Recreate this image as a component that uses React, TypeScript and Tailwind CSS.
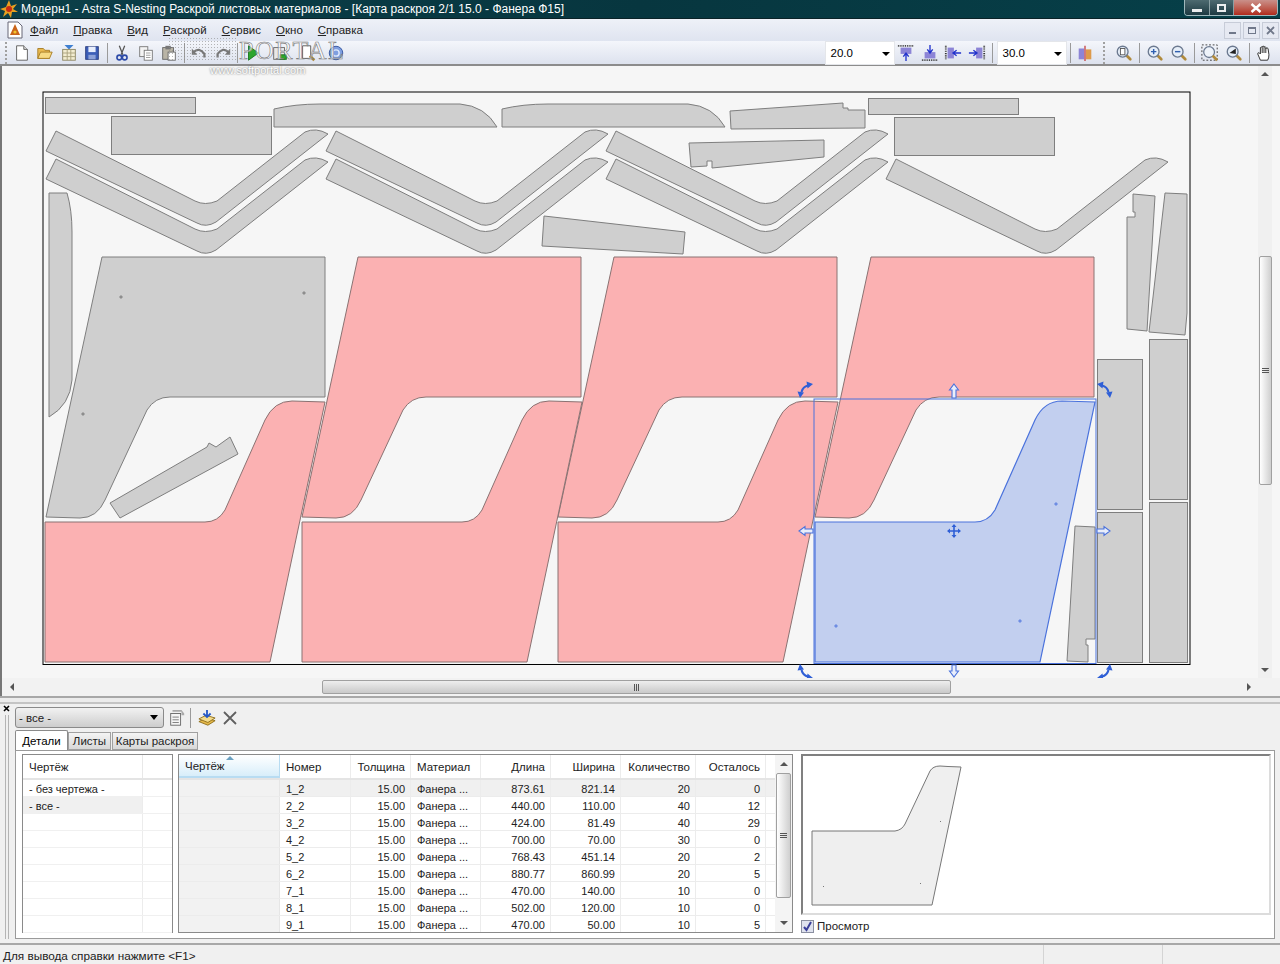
import { ReactNode } from "react";

const uiFont = { fontFamily: '"Liberation Sans", "Noto Sans", sans-serif' };

const Chevron = "M56 131 L46 151 L197 223 Q206 228 216 222 L328 134 Q316 127 305 132 L217 201 Q205 206 195 201 Z";
const Upper = "M102 257 L325 257 L325 397 L170 397 Q155 397 147 410 L105 500 Q97 518 80 518 L46 517 Z";
const Lower = "M45 522 L205 522 Q218 522 225 510 L265 420 Q274 401 292 401 L325 402 L270 662 L45 662 Z";

const rows = [
  ["1_2", "873.61", "821.14", "20", "0"],
  ["2_2", "440.00", "110.00", "40", "12"],
  ["3_2", "424.00", "81.49", "40", "29"],
  ["4_2", "700.00", "70.00", "30", "0"],
  ["5_2", "768.43", "451.14", "20", "2"],
  ["6_2", "880.77", "860.99", "20", "5"],
  ["7_1", "470.00", "140.00", "10", "0"],
  ["8_1", "502.00", "120.00", "10", "0"],
  ["9_1", "470.00", "50.00", "10", "5"],
];

const Ico = ({ children }: { children: ReactNode }) => (
  <svg width="18" height="18" viewBox="0 0 20 20" className="block">
    {children}
  </svg>
);

const Lens = ({ inner }: { inner?: ReactNode }) => (
  <Ico>
    <path d="M12 12 L17 17" stroke="#b08a3c" strokeWidth="3" strokeLinecap="round" />
    <circle cx="8.5" cy="8.5" r="6" fill="#e6eef8" stroke="#6c7a90" strokeWidth="1.5" />
    {inner}
  </Ico>
);

const icons: Record<string, ReactNode> = {
  new: (
    <Ico>
      <path d="M4 2 H12 L16 6 V18 H4 Z" fill="#fff" stroke="#5a5a5a" />
      <path d="M12 2 V6 H16" fill="#ddd" stroke="#5a5a5a" />
    </Ico>
  ),
  open: (
    <Ico>
      <path d="M2 5 H8 L10 7 H15 V16 H2 Z" fill="#e9b94f" stroke="#a57a22" />
      <path d="M2 16 L5 9 H18 L15 16 Z" fill="#f7da83" stroke="#a57a22" />
    </Ico>
  ),
  calc: (
    <Ico>
      <path d="M5 1 H15 L10 6 Z" fill="#3f7fd0" />
      <rect x="3" y="6" width="14" height="12" fill="#f2ecd0" stroke="#8a8460" />
      <path d="M3 10 H17 M3 14 H17 M8 6 V18 M12 6 V18" stroke="#a8a07a" />
    </Ico>
  ),
  save: (
    <Ico>
      <rect x="3" y="3" width="14" height="14" fill="#3d5fb8" stroke="#26397a" />
      <rect x="6" y="3" width="8" height="6" fill="#e8eefc" />
      <rect x="6" y="12" width="8" height="5" fill="#8da2d8" />
    </Ico>
  ),
  cut: (
    <Ico>
      <path d="M7 2 L11 12 M13 2 L9 12" stroke="#555" strokeWidth="1.4" />
      <circle cx="7" cy="15" r="2.6" fill="none" stroke="#2c4aa8" strokeWidth="1.8" />
      <circle cx="13" cy="15" r="2.6" fill="none" stroke="#2c4aa8" strokeWidth="1.8" />
    </Ico>
  ),
  copy: (
    <Ico>
      <rect x="3" y="3" width="9" height="11" fill="#f4f4f4" stroke="#777" />
      <rect x="8" y="7" width="9" height="11" fill="#fff" stroke="#777" />
      <path d="M10 10 H15 M10 12.5 H15 M10 15 H15" stroke="#999" />
    </Ico>
  ),
  paste: (
    <Ico>
      <rect x="3" y="4" width="12" height="13" fill="#b9b4a6" stroke="#666" />
      <rect x="6" y="2" width="6" height="4" fill="#777" />
      <rect x="9" y="9" width="8" height="9" fill="#fff" stroke="#666" />
    </Ico>
  ),
  undo: (
    <Ico>
      <path d="M4 9 Q10 3 16 11 L16 15" fill="none" stroke="#777" strokeWidth="2.5" />
      <path d="M2 5 L8 12 H2 Z" fill="#777" />
    </Ico>
  ),
  redo: (
    <Ico>
      <path d="M16 9 Q10 3 4 11 L4 15" fill="none" stroke="#777" strokeWidth="2.5" />
      <path d="M18 5 L12 12 H18 Z" fill="#777" />
    </Ico>
  ),
  play: (
    <Ico>
      <path d="M5 2 L16 10 L5 18 Z" fill="#2da52d" stroke="#17761b" />
    </Ico>
  ),
  sheet: (
    <Ico>
      <rect x="3" y="4" width="12" height="13" fill="#e8e8e8" stroke="#666" />
      <rect x="10" y="12" width="7" height="5" fill="#2da52d" stroke="#17761b" />
    </Ico>
  ),
  preview: (
    <Ico>
      <path d="M4 2 H13 V16 H4 Z" fill="#fff" stroke="#555" />
      <path d="M12 13 L17 18" stroke="#b08a3c" strokeWidth="3" />
    </Ico>
  ),
  help: (
    <Ico>
      <circle cx="10" cy="10" r="7.5" fill="#7f9fe0" stroke="#2d4f9c" />
      <circle cx="10" cy="10" r="3.5" fill="none" stroke="#dfe9fb" strokeWidth="1.6" />
    </Ico>
  ),
  alignTop: (
    <Ico>
      <path d="M1 2 H19" stroke="#333" strokeWidth="2" strokeDasharray="1 1" />
      <rect x="4" y="4" width="12" height="7" fill="#8c84d6" />
      <path d="M10 11 V19 M7 14 L10 10 L13 14" stroke="#2233cc" strokeWidth="1.5" fill="none" />
    </Ico>
  ),
  alignBottom: (
    <Ico>
      <path d="M1 18 H19" stroke="#333" strokeWidth="2" strokeDasharray="1 1" />
      <rect x="4" y="9" width="12" height="7" fill="#8c84d6" />
      <path d="M10 1 V9 M7 6 L10 10 L13 6" stroke="#2233cc" strokeWidth="1.5" fill="none" />
    </Ico>
  ),
  alignLeft: (
    <Ico>
      <path d="M2 2 V18" stroke="#333" strokeWidth="2" strokeDasharray="1 1" />
      <rect x="4" y="4" width="7" height="12" fill="#8c84d6" />
      <path d="M11 10 H19 M14 7 L10 10 L14 13" stroke="#2233cc" strokeWidth="1.5" fill="none" />
    </Ico>
  ),
  alignRight: (
    <Ico>
      <path d="M18 2 V18" stroke="#333" strokeWidth="2" strokeDasharray="1 1" />
      <rect x="9" y="4" width="7" height="12" fill="#8c84d6" />
      <path d="M1 10 H9 M6 7 L10 10 L6 13" stroke="#2233cc" strokeWidth="1.5" fill="none" />
    </Ico>
  ),
  mirror: (
    <Ico>
      <rect x="3" y="5" width="6" height="12" fill="#8c84d6" />
      <rect x="11" y="6" width="6" height="11" fill="#dd9a4a" />
      <path d="M10 2 V19" stroke="#c23a3a" strokeWidth="1.4" />
    </Ico>
  ),
  zoomPage: <Lens inner={<rect x="6" y="5" width="5" height="7" fill="#fff" stroke="#555" />} />,
  zoomIn: <Lens inner={<path d="M5.5 8.5 H11.5 M8.5 5.5 V11.5" stroke="#2f5fb0" strokeWidth="1.6" />} />,
  zoomOut: <Lens inner={<path d="M5.5 8.5 H11.5" stroke="#2f5fb0" strokeWidth="1.6" />} />,
  zoomFrame: (
    <Ico>
      <rect x="1" y="1" width="17" height="17" fill="none" stroke="#333" strokeDasharray="2 2" />
      <circle cx="9" cy="9" r="6" fill="#eef3fa" stroke="#6c7a90" strokeWidth="1.4" />
      <path d="M13 13 L18 18" stroke="#b08a3c" strokeWidth="3" />
    </Ico>
  ),
  zoomDark: <Lens inner={<path d="M5 10 L12 5 V11 Z" fill="#222" />} />,
  hand: (
    <Ico>
      <path
        d="M6 18 L3 11 Q3 9 5 10 L6 11 V4 Q7 2.5 8 4 V3 Q9 1.5 10 3 V3.5 Q11.5 2 12 4 V5 Q13.5 3.5 14.5 5 L15.5 12 Q15.5 16 14 18 Z"
        fill="#fff"
        stroke="#222"
      />
      <path d="M8 4 V10 M10 3.5 V10 M12 4.5 V10" stroke="#222" />
    </Ico>
  ),
  stamp: (
    <Ico>
      <path d="M5 3 H15 V7 H18 V5 L15 1 H5 Z" fill="#aaa" />
      <rect x="3" y="5" width="11" height="13" fill="#f5f5f5" stroke="#666" />
      <path d="M5 9 H12 M5 12 H12 M5 15 H12" stroke="#777" />
    </Ico>
  ),
  layers: (
    <Ico>
      <path d="M1 14 L9 10 L19 13 L11 18 Z" fill="#e6b94a" stroke="#8c6c1a" />
      <path d="M1 11 L9 7 L19 10 L11 15 Z" fill="#f4dc8c" stroke="#8c6c1a" />
      <path d="M10 1 V8 M6 5 L10 9 L14 5" stroke="#2457c5" strokeWidth="2" fill="none" />
    </Ico>
  ),
};

const Btn = ({ name, w = "w-[23.5px]" }: { name: string; w?: string }) => (
  <div className={`flex shrink-0 items-center justify-center ${w}`}>{icons[name]}</div>
);

const Grip = () => <div className="h-[22px] w-[3px] shrink-0 border-l-2 border-dotted border-[#a0a0a0]" />;

const Sep = ({ w }: { w: string }) => (
  <div className={`flex h-full shrink-0 items-center justify-center ${w}`}>
    <div className="h-[20px] w-px bg-[#9a9a9a]" />
  </div>
);

const ToolCombo = ({ value }: { value: string }) => (
  <div className="flex h-[24px] w-[70px] shrink-0 items-center justify-between border border-[#e4e6ea] bg-white pl-[5px] pr-[4px] text-black">
    <span>{value}</span>
    <span className="mt-[2px] h-0 w-0 border-x-[4px] border-t-[4px] border-x-transparent border-t-black" />
  </div>
);

const Arrow = ({ dir }: { dir: "up" | "down" | "left" | "right" }) => {
  const cls = {
    up: "border-x-[4px] border-b-[4px] border-x-transparent border-b-[#555]",
    down: "border-x-[4px] border-t-[4px] border-x-transparent border-t-[#555]",
    left: "border-y-[4px] border-r-[4px] border-y-transparent border-r-[#555]",
    right: "border-y-[4px] border-l-[4px] border-y-transparent border-l-[#555]",
  }[dir];
  return <span className={`h-0 w-0 ${cls}`} />;
};

const VGrip = () => (
  <div className="flex flex-col gap-px">
    <div className="h-px w-[7px] bg-[#555]" />
    <div className="h-px w-[7px] bg-[#555]" />
    <div className="h-px w-[7px] bg-[#555]" />
  </div>
);

const RotateHandle = ({ transform }: { transform?: string }) => (
  <g transform={transform}>
    <path d="M801.5 392 Q803 386.5 808 385.5" fill="none" stroke="#2f5fd6" strokeWidth="2.2" />
    <path d="M813 384 L806.5 381.5 L807.5 388.5 Z M800 398 L797.5 391.5 L804 392.5 Z" fill="#2f5fd6" />
  </g>
);

const Canvas = () => {
  const gray = { fill: "#cfcfcf", stroke: "#7e7e7e", strokeWidth: 1 };
  const pink = { fill: "#fbb1b2", stroke: "#8a7272", strokeWidth: 1 };
  const dot = { r: 1.4, fill: "#b98a8a", stroke: "#806060", strokeWidth: 0.5 };
  const sel = "#4a72dc";
  return (
    <svg width="1256" height="612" viewBox="2 66 1256 612" className="block shrink-0">
      <rect x="43" y="92" width="1147" height="572.5" fill="#f6f6f6" stroke="#000" />
      <g {...gray}>
        <rect x="45.5" y="97.5" width="150" height="16" />
        <rect x="111.5" y="116.5" width="160" height="38" />
        <rect x="868.5" y="98.5" width="150" height="16" />
        <rect x="894.5" y="117.5" width="160" height="38" />
        <path d="M274 109 Q295 104 320 104 L460 104 Q485 106 497 127 L274 127 Z" />
        <path d="M502 109 Q523 104 548 104 L688 104 Q713 106 725 127 L502 127 Z" />
        <path d="M730 111 L843 103 L843 108 L848 108 L848 110 L865 110 L865 128 L731 129 Z" />
        <path d="M689 143 L824 140 L824 157 L712 168 L712 161 L707 161 L707 166 L691 167 Z" />
        <path d="M544 216 L685 232 L683 254 L542 246 Z" />
        <path d="M49 193 L67 193 Q72 210 72 232 L72 380 Q70 405 49 417 Z" />
        <path d="M110 503 L207 447 L209 443 L216 447 L230 437 L238 454 L120 518 Z" />
        <path d={Upper} />
        {[0, 280, 560].map((x) => (
          <g key={x} transform={`translate(${x} 0)`}>
            <path d={Chevron} />
            <path d={Chevron} transform="translate(0 28)" />
          </g>
        ))}
        <path d={Chevron} transform="translate(840 28)" />
        <path d="M1133 194 L1155 196 L1147 331 L1127 329 L1127 217 L1135 217 L1135 212 L1133 212 Z" />
        <path d="M1165 193 L1187 194 L1187 313 L1185 335 L1149 332 Z" />
        <rect x="1149.5" y="339.5" width="38" height="160" />
        <rect x="1149.5" y="502.5" width="38" height="160" />
        <rect x="1097.5" y="359.5" width="45" height="150" />
        <rect x="1097.5" y="512.5" width="45" height="150" />
        <path d="M1075 526 L1095 527 L1095 639 L1086 639 L1086 645 L1088 645 L1088 662 L1067 661 Z" />
      </g>
      <g {...pink}>
        {[256, 512, 769].map((x) => (
          <path key={x} d={Upper} transform={`translate(${x} 0)`} />
        ))}
        {[0, 257, 513].map((x) => (
          <path key={x} d={Lower} transform={`translate(${x} 0)`} />
        ))}
      </g>
      <path d={Lower} transform="translate(770 0)" fill="#c2cfef" stroke={sel} strokeWidth="1.2" />
      <g fill="#999" stroke="#777" strokeWidth="0.5">
        <circle cx="121" cy="297" r="1.3" />
        <circle cx="304" cy="293" r="1.3" />
        <circle cx="83" cy="414" r="1.3" />
      </g>
      {[256, 512, 769].map((x) => (
        <g key={x} transform={`translate(${x} 0)`} {...dot}>
          <circle cx="121" cy="297" />
          <circle cx="304" cy="293" />
          <circle cx="83" cy="414" />
        </g>
      ))}
      {[0, 257, 513].map((x) => (
        <g key={x} transform={`translate(${x} 0)`} {...dot}>
          <circle cx="67" cy="627" />
          <circle cx="250" cy="621" />
          <circle cx="287" cy="505" />
        </g>
      ))}
      <g transform="translate(770 0)" fill="#7f99e6" stroke={sel} strokeWidth="0.5">
        <circle cx="66" cy="626" r="1.3" />
        <circle cx="250" cy="621" r="1.3" />
        <circle cx="286" cy="504" r="1.3" />
      </g>
      <rect x="814" y="399" width="282" height="264.5" fill="none" stroke={sel} strokeWidth="1" />
      <g fill="#e9eefb" stroke={sel} strokeWidth="1.1">
        <path d="M954 384 L958.5 390 L956 390 L956 398 L952 398 L952 390 L949.5 390 Z" />
        <path d="M954 677 L958.5 671 L956 671 L956 665 L952 665 L952 671 L949.5 671 Z" />
        <path d="M799 531 L805 526.5 L805 529 L813 529 L813 533 L805 533 L805 535.5 Z" />
        <path d="M1110 531 L1104 526.5 L1104 529 L1097 529 L1097 533 L1104 533 L1104 535.5 Z" />
      </g>
      <path d="M948 531 H960 M954 525 V537" stroke="#2f5fd6" strokeWidth="1.6" fill="none" />
      <path
        d="M947 531 L950 528.5 V533.5 Z M961 531 L958 528.5 V533.5 Z M954 524 L951.5 527 H956.5 Z M954 538 L951.5 535 H956.5 Z"
        fill="#2f5fd6"
      />
      <RotateHandle />
      <RotateHandle transform="translate(1910 0) scale(-1 1)" />
      <RotateHandle transform="translate(0 1062) scale(1 -1)" />
      <RotateHandle transform="translate(1910 1062) scale(-1 -1)" />
    </svg>
  );
};

const Watermark = () => (
  <div className="pointer-events-none absolute left-[168px] top-[37px] h-[39px] w-[190px]">
    <div className="absolute left-0 top-0 h-[23px] w-[70px] bg-[radial-gradient(#8a8a8a_1px,transparent_1px)] bg-[length:3px_3px] opacity-60" />
    <div
      className="absolute left-[71px] top-[2px] text-[26px] leading-[24px] tracking-[1.5px] text-white/60 [-webkit-text-stroke:0.6px_#777]"
      style={{ fontFamily: '"Liberation Serif", serif' }}
    >
      PORTAL
    </div>
    <div className="absolute left-[42px] top-[27px] text-[11px] leading-[12px] text-white [text-shadow:0_0_2px_#555]">
      www.softportal.com
    </div>
  </div>
);

const Col = ({ w, right, children }: { w: string; right?: boolean; children: ReactNode }) => (
  <div
    className={`flex h-full shrink-0 items-center border-r border-[#ececec] pt-px ${w} ${right ? "justify-end pr-[5px]" : "pl-[6px]"}`}
  >
    {children}
  </div>
);

export default function App() {
  const menus = ["Файл", "Правка", "Вид", "Раскрой", "Сервис", "Окно", "Справка"];
  return (
    <div
      className="relative flex h-[964px] w-[1280px] flex-col overflow-hidden bg-[#f0f0f0] text-[11.5px] leading-[16px] text-[#222]"
      style={uiFont}
    >
      {/* title bar */}
      <div className="flex h-[18px] shrink-0 items-center bg-gradient-to-r from-[#0c3f49] via-[#07363f] to-[#064049] text-[12px] text-white">
        <svg width="18" height="18" viewBox="0 0 18 18" className="shrink-0">
          <path d="M9 0 L11 6 L17 4 L13 9 L18 12 L12 12 L11 18 L8 13 L3 17 L5 11 L0 9 L6 7 Z" fill="#e8a020" />
          <circle cx="9" cy="9" r="3" fill="#c62b12" />
        </svg>
        <span className="ml-[3px] whitespace-nowrap">
          Модерн1 - Astra S-Nesting Раскрой листовых материалов - [Карта раскроя 2/1 15.0 - Фанера Ф15]
        </span>
        <div className="ml-auto mr-[2px] flex h-[16px] self-start overflow-hidden rounded-b-[4px] border border-t-0 border-[#9fb8bc]">
          <div className="flex w-[25px] items-center justify-center border-r border-[#8aa0a4] bg-gradient-to-b from-[#4d6a70] to-[#1d3a42]">
            <div className="mt-[5px] h-[3px] w-[10px] bg-white/90" />
          </div>
          <div className="flex w-[24px] items-center justify-center border-r border-[#8aa0a4] bg-gradient-to-b from-[#4d6a70] to-[#1d3a42]">
            <div className="h-[8px] w-[9px] border-2 border-white/90" />
          </div>
          <div className="flex w-[43px] items-center justify-center bg-gradient-to-b from-[#c9908a] to-[#b0281a]">
            <svg width="12" height="10" viewBox="0 0 12 10">
              <path d="M1.5 1 L10.5 9 M10.5 1 L1.5 9" stroke="#fff" strokeWidth="2.4" />
            </svg>
          </div>
        </div>
      </div>
      <div className="h-px shrink-0 bg-[#0a2328]" />

      {/* menu */}
      <div className="flex h-[22px] shrink-0 items-center bg-gradient-to-b from-[#eef1f8] to-[#dfe4f0]">
        <svg width="18" height="18" viewBox="0 0 18 18" className="ml-[6px] shrink-0">
          <path d="M2 1 H12 L16 5 V17 H2 Z" fill="#fff" stroke="#667" />
          <path d="M9 3 L14 14 H4 Z" fill="#c9641a" />
          <circle cx="9" cy="11" r="1.6" fill="#f2c62e" />
        </svg>
        <div className="ml-[6px] flex gap-[15px] leading-[12px]">
          {menus.map((m) => (
            <span key={m}>
              <span className="underline">{m[0]}</span>
              {m.slice(1)}
            </span>
          ))}
        </div>
        <div className="ml-auto mr-px flex gap-[2px]">
          {["minimize", "restore", "close"].map((b) => (
            <div
              key={b}
              className="flex h-[17px] w-[17px] items-center justify-center border border-[#c7ccd8] bg-[#e6e9f2]"
            >
              {b === "minimize" && <div className="mt-[6px] h-[2px] w-[7px] bg-[#70788a]" />}
              {b === "restore" && <div className="h-[7px] w-[8px] border border-t-2 border-[#70788a]" />}
              {b === "close" && (
                <svg width="9" height="9" viewBox="0 0 9 9">
                  <path d="M1 1 L8 8 M8 1 L1 8" stroke="#70788a" strokeWidth="1.8" />
                </svg>
              )}
            </div>
          ))}
        </div>
      </div>

      {/* toolbar */}
      <div className="flex h-[25px] shrink-0 items-center border-b-2 border-[#8c8c8c] bg-gradient-to-b from-[#f4f6fb] to-[#dde2ee] pl-[5px]">
        <Grip />
        <div className="w-[2px] shrink-0" />
        <Btn name="new" />
        <Btn name="open" />
        <Btn name="calc" />
        <Btn name="save" />
        <Sep w="w-[6.5px]" />
        <Btn name="cut" />
        <Btn name="copy" />
        <Btn name="paste" />
        <Sep w="w-[6.5px]" />
        <Btn name="undo" />
        <Btn name="redo" />
        <Sep w="w-[6.5px]" />
        <Btn name="play" />
        <Btn name="sheet" w="w-[30px]" />
        <Btn name="preview" w="w-[26px]" />
        <Btn name="help" w="w-[30px]" />
        <div className="ml-[474px] flex h-full items-center">
          <ToolCombo value="20.0" />
          <Btn name="alignTop" />
          <Btn name="alignBottom" />
          <Btn name="alignLeft" />
          <Btn name="alignRight" />
          <Sep w="w-[8px]" />
          <ToolCombo value="30.0" />
          <Sep w="w-[7px]" />
          <Btn name="mirror" />
          <div className="flex w-[15.5px] shrink-0 justify-center">
            <Grip />
          </div>
          <Btn name="zoomPage" />
          <Sep w="w-[7.5px]" />
          <Btn name="zoomIn" />
          <Btn name="zoomOut" />
          <Sep w="w-[8px]" />
          <Btn name="zoomFrame" />
          <Btn name="zoomDark" />
          <Sep w="w-[7px]" />
          <Btn name="hand" />
        </div>
      </div>

      {/* drawing area */}
      <div className="flex h-[612px] shrink-0 border-l-2 border-[#777] bg-[#f6f6f6]">
        <Canvas />
        <div className="flex w-[14px] shrink-0 flex-col items-center bg-[#f0f0f0]">
          <div className="flex h-[16px] items-center justify-center">
            <Arrow dir="up" />
          </div>
          <div className="mt-[174px] flex h-[229px] w-[13px] items-center justify-center rounded-[2px] border border-[#a0a0a0] bg-gradient-to-r from-white to-[#cfcfcf]">
            <VGrip />
          </div>
          <div className="mt-auto flex h-[16px] items-center justify-center">
            <Arrow dir="down" />
          </div>
        </div>
      </div>

      {/* horizontal scrollbar */}
      <div className="flex h-[18px] shrink-0 items-center border-l-2 border-[#777] bg-[#f2f2f2] pr-[26px]">
        <div className="ml-[5px] flex w-[10px] justify-center">
          <Arrow dir="left" />
        </div>
        <div className="ml-[305px] flex h-[14px] w-[629px] items-center justify-center gap-px rounded-[2px] border border-[#a0a0a0] bg-gradient-to-b from-[#eeeeee] to-[#c9c9c9]">
          <div className="h-[7px] w-px bg-[#555]" />
          <div className="h-[7px] w-px bg-[#555]" />
          <div className="h-[7px] w-px bg-[#555]" />
        </div>
        <div className="ml-auto flex w-[10px] justify-center">
          <Arrow dir="right" />
        </div>
      </div>

      {/* splitter */}
      <div className="h-[8px] shrink-0 border-y-2 border-[#a8a8a8] border-b-[#c4c4c4] bg-[#ececec]" />

      {/* bottom panel */}
      <div className="flex min-h-0 flex-1 bg-[#f0f0f0] pr-[5px]">
        <div className="flex w-[15px] shrink-0 flex-col items-center pb-[4px] pr-[2px]">
          <svg width="7" height="7" viewBox="0 0 7 7" className="mt-[1px] shrink-0">
            <path d="M1 1 L6 6 M6 1 L1 6" stroke="#000" strokeWidth="1.6" />
          </svg>
          <div className="mt-[3px] w-[4px] flex-1 border-x border-[#b4b4b4]" />
        </div>
        <div className="flex min-w-0 flex-1 flex-col">
          <div className="flex h-[26px] shrink-0 items-center pt-[1px]">
            <div className="flex h-[21px] w-[149px] items-center justify-between rounded-[3px] border border-[#8a8a8a] bg-gradient-to-b from-[#f2f2f2] to-[#cdcdcd] pl-[3px] pr-[5px]">
              <span className="pt-px">- все -</span>
              <span className="h-0 w-0 border-x-[4px] border-t-[5px] border-x-transparent border-t-black" />
            </div>
            <div className="ml-[3px] flex w-[20px] justify-center">{icons.stamp}</div>
            <div className="ml-[3px] mr-[7px] h-[20px] w-px bg-[#9a9a9a]" />
            <div className="flex w-[18px] justify-center">{icons.layers}</div>
            <svg width="14" height="14" viewBox="0 0 14 14" className="ml-[7px]">
              <path d="M1 1 L13 13 M13 1 L1 13" stroke="#606060" strokeWidth="1.8" />
            </svg>
          </div>
          <div className="flex h-[20px] shrink-0 items-end whitespace-nowrap">
            <div className="flex h-[20px] w-[53px] items-center justify-center rounded-t-[2px] border border-b-0 border-[#8a8a8a] bg-white text-black">
              Детали
            </div>
            <div className="flex h-[18px] w-[43px] items-center justify-center border border-[#a0a0a0] bg-gradient-to-b from-[#f4f4f4] to-[#d8d8d8]">
              Листы
            </div>
            <div className="ml-px flex h-[18px] w-[86px] items-center justify-center border border-[#a0a0a0] bg-gradient-to-b from-[#f4f4f4] to-[#d8d8d8]">
              Карты раскроя
            </div>
          </div>
          <div className="flex h-[189px] shrink-0 border border-[#9a9a9a] bg-white pl-[6px] pt-[3px]">
            {/* drawings list */}
            <div className="flex h-[179px] w-[151px] shrink-0 flex-col border border-[#8a8a8a]">
              <div className="flex h-[25px] shrink-0 items-center border-b-2 border-[#e4e4e4]">
                <div className="flex h-full w-[120px] items-center border-r border-[#e8e8e8] pl-[6px] pt-px">
                  Чертёж
                </div>
              </div>
              {["- без чертежа -", "- все -", "", "", "", "", "", "", ""].map((t, i) => (
                <div key={i} className="flex h-[17px] shrink-0 items-center border-b border-[#f0f0f0] text-[11px]">
                  <div
                    className={`flex h-full w-[120px] items-center border-r border-[#ececec] pl-[6px] pt-px ${i === 1 ? "bg-[#f0f0f0]" : ""}`}
                  >
                    {t}
                  </div>
                </div>
              ))}
            </div>
            {/* parts table */}
            <div className="ml-[5px] flex h-[179px] w-[615px] shrink-0 overflow-hidden border border-[#8a8a8a]">
              <div className="flex min-w-0 flex-1 flex-col">
                <div className="flex h-[25px] shrink-0 items-center border-b-2 border-[#e4e4e4]">
                  <div className="relative flex h-full w-[101px] shrink-0 items-center border-b-2 border-r border-[#b8dcf2] bg-gradient-to-b from-white to-[#d8eefa] pl-[6px] pt-px">
                    Чертёж
                    <span className="absolute left-[47px] top-[1px] h-0 w-0 border-x-[4px] border-b-[4px] border-x-transparent border-b-[#6aa0c0]" />
                  </div>
                  <Col w="w-[71px]">Номер</Col>
                  <Col w="w-[60px]" right>
                    Толщина
                  </Col>
                  <Col w="w-[70px]">Материал</Col>
                  <Col w="w-[70px]" right>
                    Длина
                  </Col>
                  <Col w="w-[70px]" right>
                    Ширина
                  </Col>
                  <Col w="w-[75px]" right>
                    Количество
                  </Col>
                  <Col w="w-[70px]" right>
                    Осталось
                  </Col>
                </div>
                {rows.map((r, i) => (
                  <div
                    key={r[0]}
                    className={`flex h-[17px] shrink-0 items-center border-b border-[#ececec] text-[11px] ${i === 0 ? "bg-[#f0f0f0]" : ""}`}
                  >
                    <div className="h-full w-[101px] shrink-0 border-r border-[#e6e6e6] bg-[#f2f2f2]" />
                    <Col w="w-[71px]">{r[0]}</Col>
                    <Col w="w-[60px]" right>
                      15.00
                    </Col>
                    <Col w="w-[70px]">Фанера ...</Col>
                    <Col w="w-[70px]" right>
                      {r[1]}
                    </Col>
                    <Col w="w-[70px]" right>
                      {r[2]}
                    </Col>
                    <Col w="w-[75px]" right>
                      {r[3]}
                    </Col>
                    <Col w="w-[70px]" right>
                      {r[4]}
                    </Col>
                  </div>
                ))}
              </div>
              <div className="flex w-[17px] shrink-0 flex-col items-center bg-[#f4f4f4]">
                <div className="flex h-[18px] items-center">
                  <Arrow dir="up" />
                </div>
                <div className="flex h-[125px] w-[15px] items-center justify-center rounded-[2px] border border-[#a0a0a0] bg-gradient-to-r from-white to-[#cfcfcf]">
                  <VGrip />
                </div>
                <div className="mt-auto flex h-[18px] items-center">
                  <Arrow dir="down" />
                </div>
              </div>
            </div>
            {/* preview */}
            <div className="ml-[8px] flex w-[470px] shrink-0 flex-col">
              <div className="h-[161px] shrink-0 border-2 border-[#808080] border-b-[#dcdcdc] border-r-[#dcdcdc] bg-white">
                <svg width="466" height="157" viewBox="803 756 466 157" className="block">
                  <path
                    d="M812 831 L895 831 Q902 830 905 824 L930 771 Q933 766 940 766 L948 766.5 L961 767 L932 905 L812 905 Z"
                    fill="#efefef"
                    stroke="#777"
                  />
                  <g fill="#777">
                    <rect x="823" y="886" width="1" height="1" />
                    <rect x="920" y="883" width="1" height="1" />
                    <rect x="940" y="821" width="1" height="1" />
                  </g>
                </svg>
              </div>
              <div className="mt-[3px] flex items-center gap-[3px]">
                <div className="flex h-[13px] w-[13px] items-center justify-center border border-[#8a8fa0] bg-[#dfe2ee]">
                  <svg width="11" height="11" viewBox="0 0 11 11">
                    <path d="M2 6 L4.5 9 L9 1" fill="none" stroke="#3a3f9a" strokeWidth="2" />
                  </svg>
                </div>
                <span>Просмотр</span>
              </div>
            </div>
          </div>
        </div>
      </div>

      {/* status bar */}
      <div className="flex h-[21px] shrink-0 items-center border-t-2 border-[#a8a8a8] bg-[#f0f0f0] text-[11.75px]">
        <span className="ml-[3px] mt-[2px] w-[1040px] whitespace-nowrap">Для вывода справки нажмите &lt;F1&gt;</span>
        <div className="h-full w-[119px] border-l border-[#d4d4d4]" />
        <div className="h-full flex-1 border-l border-[#d4d4d4]" />
      </div>

      <Watermark />
    </div>
  );
}
